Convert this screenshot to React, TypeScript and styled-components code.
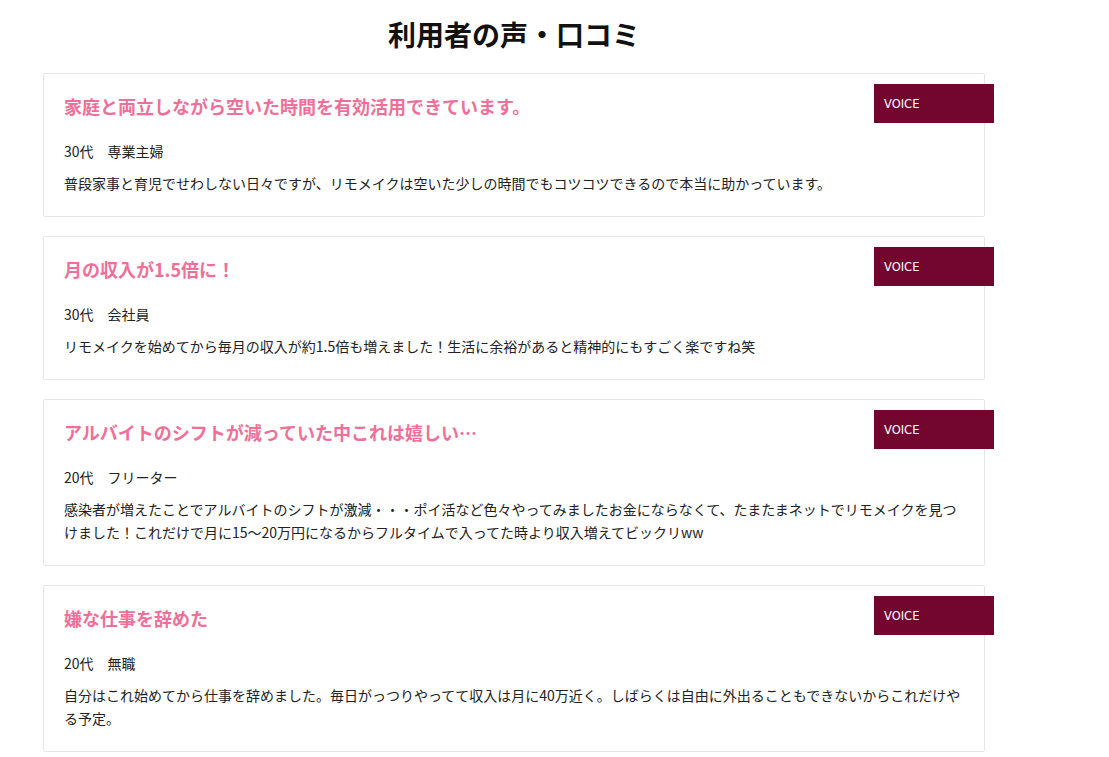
import React from 'react'
import styled, { createGlobalStyle } from 'styled-components'

type Voice = {
  title: string
  profile: string
  body: string
}

const voices: Voice[] = [
  {
    title: '家庭と両立しながら空いた時間を有効活用できています。',
    profile: '30代　専業主婦',
    body: '普段家事と育児でせわしない日々ですが、リモメイクは空いた少しの時間でもコツコツできるので本当に助かっています。',
  },
  {
    title: '月の収入が1.5倍に！',
    profile: '30代　会社員',
    body: 'リモメイクを始めてから毎月の収入が約1.5倍も増えました！生活に余裕があると精神的にもすごく楽ですね笑',
  },
  {
    title: 'アルバイトのシフトが減っていた中これは嬉しい…',
    profile: '20代　フリーター',
    body: '感染者が増えたことでアルバイトのシフトが激減・・・ポイ活など色々やってみましたお金にならなくて、たまたまネットでリモメイクを見つけました！これだけで月に15〜20万円になるからフルタイムで入ってた時より収入増えてビックリww',
  },
  {
    title: '嫌な仕事を辞めた',
    profile: '20代　無職',
    body: '自分はこれ始めてから仕事を辞めました。毎日がっつりやってて収入は月に40万近く。しばらくは自由に外出ることもできないからこれだけやる予定。',
  },
]

const App = () => {
  return (
    <>
      <GlobalStyle />
      <Section>
        <Heading>利用者の声・口コミ</Heading>
        <VoiceList>
          {voices.map((v, i) => (
            <VoiceCard key={i}>
              <Badge>VOICE</Badge>
              <VoiceTitle>{v.title}</VoiceTitle>
              <Profile>{v.profile}</Profile>
              <Body>{v.body}</Body>
            </VoiceCard>
          ))}
        </VoiceList>
      </Section>
    </>
  )
}

export default App

const GlobalStyle = createGlobalStyle`
body {
  margin: 0;
  background: #fff;
  font-family: "Noto Sans CJK JP", "Noto Sans", sans-serif;
  color: #222;
}
`

const Section = styled.section`
width: 942px;
margin-left: 43px;
padding-top: 14px;
`

const Heading = styled.h2`
margin: 0 0 19px;
text-align: center;
font-size: 28px;
line-height: 40px;
font-weight: 700;
color: #111;
`

const VoiceList = styled.ul`
list-style: none;
margin: 0;
padding: 0;
display: flex;
flex-direction: column;
gap: 19px;
`

const VoiceCard = styled.li`
position: relative;
border: 1px solid #e6e6e6;
border-radius: 2px;
padding: 19px 20px 21px;
`

const Badge = styled.span`
position: absolute;
top: 10px;
right: -10px;
width: 120px;
height: 39px;
box-sizing: border-box;
padding-left: 10px;
display: flex;
align-items: center;
background: #72062f;
color: #fff;
font-family: "DejaVu Sans", sans-serif;
font-size: 11.5px;
`

const VoiceTitle = styled.h3`
margin: 0 0 20px;
padding-right: 130px;
font-size: 18px;
line-height: 27px;
font-weight: 700;
color: #ef6f98;
`

const Profile = styled.p`
margin: 0 0 9px;
font-size: 14px;
line-height: 23px;
color: #222;
`

const Body = styled.p`
margin: 0;
font-size: 14px;
line-height: 23px;
color: #222;
`
